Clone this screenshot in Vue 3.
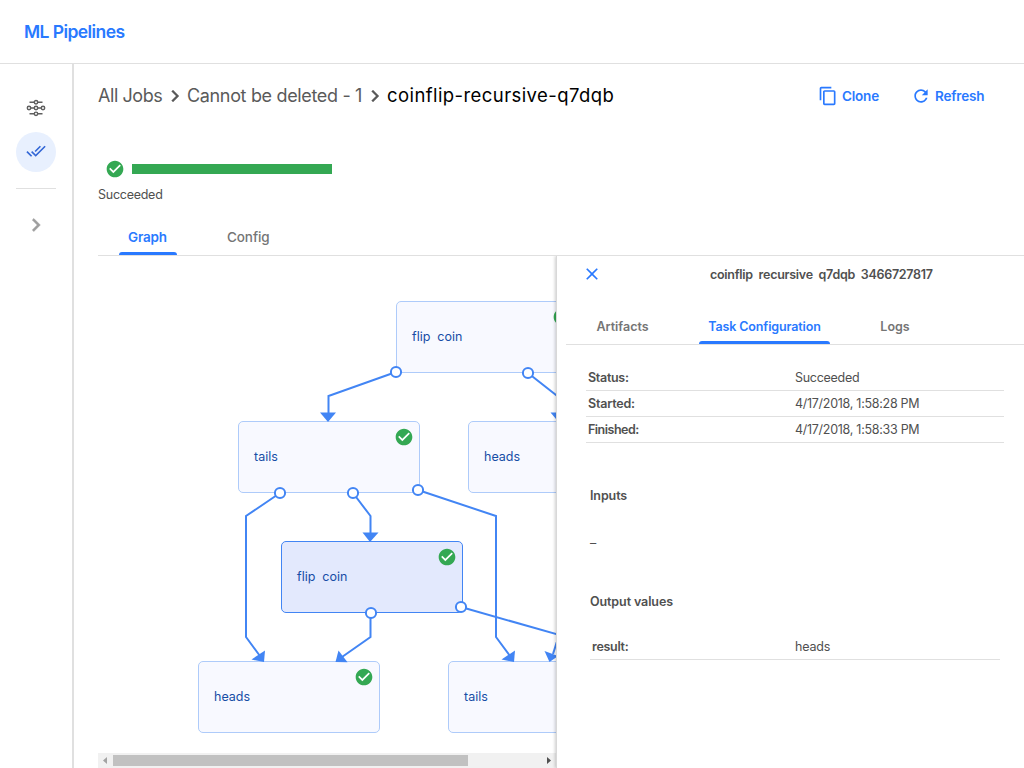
<script setup>
const nodes = [
  { x: 298, y: 45, label: 'flip  coin', cls: 'wide' },
  { x: 140, y: 165, label: 'tails' },
  { x: 370, y: 165, label: 'heads' },
  { x: 183, y: 285, label: 'flip  coin', cls: 'wide selected' },
  { x: 100, y: 405, label: 'heads' },
  { x: 350, y: 405, label: 'tails' },
]
const edges = [
  '298,116 230.5,140 230.5,158',
  '430,117 460.5,141 460.5,158',
  '182,237 148,260 148,381 162,400',
  '255,237 272.5,260 272.5,278',
  '320,234 398,260 398,381 412,400',
  '272.5,357 272.5,381 244,401',
  '363,351 500,390',
  '461,379 455,398',
]
const arrows = [
  '222,156.5 238,156.5 230,166',
  '452.5,156.5 468.5,156.5 460.5,166',
  '264.5,276.5 280.5,276.5 272,286',
  '153.5,403.5 167,394.5 166,406',
  '403.5,403.5 417,394.5 416,406',
  '240.5,394.5 237.5,406 249.5,406.3',
  '446.5,395 460,400 451.5,406',
]
const ports = [[298, 116], [430, 117], [182, 237], [255, 237], [320, 234], [273, 357], [363, 351]]
const title = 'coinflip  recursive  q7dqb  3466727817'
const details = [
  ['Status:', 'Succeeded', 'd0', 'v0'],
  ['Started:', '4/17/2018, 1:58:28 PM', 'd1', 'v1'],
  ['Finished:', '4/17/2018, 1:58:33 PM', 'd2', 'v1'],
]
const check = 'M12 2C6.48 2 2 6.48 2 12s4.48 10 10 10 10-4.48 10-10S17.52 2 12 2zm-2 15l-5-5 1.41-1.41L10 14.17l7.59-7.59L19 8l-9 9z'
</script>

<template>
  <div class="page">
    <header class="top"><span class="brand">ML Pipelines</span></header>
    <div class="body">
      <nav class="side">
        <div class="nav-item">
          <svg width="20" height="20" viewBox="0 0 20 20" fill="none" stroke="#5f5f5f" stroke-width="1.45">
            <path d="M3.5 4.2H8M12 4.2h4.500M4.700 10H8M12 10h3.300M3.500 15.800H8M12 15.800h4.500" />
            <circle cx="10" cy="4.200" r="1.700" /><circle cx="10" cy="10" r="1.700" /><circle cx="10" cy="15.800" r="1.700" />
            <circle cx="3" cy="10" r="1.700" /><circle cx="17" cy="10" r="1.700" />
          </svg>
        </div>
        <div class="nav-item active">
          <svg width="20" height="20" viewBox="0 0 24 24" fill="#3367d6">
            <path d="M18 7l-1.410-1.410-6.340 6.340 1.410 1.410L18 7zm4.240-1.410L11.660 16.170 7.480 12l-1.410 1.410L11.660 19l12-12-1.420-1.410zM.410 13.410L6 19l1.410-1.410L1.830 12 .410 13.410z" />
          </svg>
        </div>
        <div class="rule"></div>
        <svg class="expand" width="26" height="26" viewBox="0 0 24 24" fill="#9e9e9e" stroke="#9e9e9e" stroke-width=".5"><path d="M10 6L8.590 7.410 13.170 12l-4.580 4.590L10 18l6-6z" /></svg>
      </nav>
      <main class="main">
        <div class="toolbar">
          <span class="crumb c1">All Jobs</span>
          <svg class="sep" width="24" height="24" viewBox="0 0 24 24" fill="#5a5a5a" stroke="#5a5a5a" stroke-width=".3"><path d="M10 6L8.590 7.410 13.170 12l-4.580 4.590L10 18l6-6z" /></svg>
          <span class="crumb c2">Cannot be deleted - 1</span>
          <svg class="sep" width="24" height="24" viewBox="0 0 24 24" fill="#5a5a5a" stroke="#5a5a5a" stroke-width=".3"><path d="M10 6L8.590 7.410 13.170 12l-4.580 4.590L10 18l6-6z" /></svg>
          <span class="crumb c3">coinflip-recursive-q7dqb</span>
          <div class="action clone">
            <svg width="20" height="20" viewBox="0 0 24 24" fill="#2979ff"><path d="M16 1H4c-1.100 0-2 .900-2 2v14h2V3h12V1zm3 4H8c-1.100 0-2 .900-2 2v14c0 1.100.900 2 2 2h11c1.100 0 2-.900 2-2V7c0-1.100-.900-2-2-2zm0 16H8V7h11v14z" /></svg>
            <span>Clone</span>
          </div>
          <div class="action refresh">
            <svg width="20" height="20" viewBox="0 0 24 24" fill="#2979ff"><path d="M17.650 6.350C16.200 4.900 14.210 4 12 4c-4.420 0-7.990 3.580-7.990 8s3.570 8 7.990 8c3.730 0 6.840-2.550 7.730-6h-2.080c-.820 2.330-3.040 4-5.650 4-3.310 0-6-2.690-6-6s2.690-6 6-6c1.660 0 3.140.690 4.220 1.780L13 11h7V4l-2.350 2.350z" /></svg>
            <span>Refresh</span>
          </div>
        </div>
        <div class="progress">
          <svg width="20" height="20" viewBox="0 0 24 24" fill="#34a853"><path :d="check" /></svg>
          <div class="bar"></div>
        </div>
        <div class="state">Succeeded</div>
        <div class="tabs">
          <div class="tab on t1"><span>Graph</span></div>
          <div class="tab t2"><span>Config</span></div>
        </div>
        <div class="work">
          <section class="graph">
            <div class="canvas">
              <div v-for="(n, i) in nodes" :key="i" class="node" :class="n.cls" :style="{ left: n.x + 'px', top: n.y + 'px' }">
                <span>{{ n.label }}</span>
                <svg width="20" height="20" viewBox="0 0 24 24" fill="#34a853"><path d="M5 7h14v11H5z" fill="#fff" /><path :d="check" /></svg>
              </div>
              <svg class="edges" width="458" height="497" viewBox="0 0 458 497">
                <polyline v-for="(p, i) in edges" :key="'e' + i" :points="p" fill="none" stroke="#4285f4" stroke-width="2" />
                <polygon v-for="(p, i) in arrows" :key="'a' + i" :points="p" fill="#4285f4" />
                <circle v-for="(p, i) in ports" :key="'p' + i" :cx="p[0]" :cy="p[1]" r="5.100" fill="#fff" stroke="#4285f4" stroke-width="2" />
              </svg>
            </div>
            <div class="scroll">
              <svg class="arr" width="15" height="15"><path d="M9 4v7L5 7.500z" fill="#a3a3a3" /></svg>
              <div class="thumb"></div>
              <svg class="arr" width="15" height="15"><path d="M6 4v7l4-3.500z" fill="#505050" /></svg>
            </div>
          </section>
          <aside class="panel">
            <div class="panel-head">
              <svg width="20" height="20" viewBox="0 0 24 24" fill="#2979ff"><path d="M19 6.410L17.590 5 12 10.590 6.410 5 5 6.410 10.590 12 5 17.590 6.410 19 12 13.410 17.590 19 19 17.590 13.410 12z" /></svg>
              <span class="title">{{ title }}</span>
            </div>
            <div class="ptabs">
              <div class="ptab p1"><span>Artifacts</span></div>
              <div class="ptab p2 on"><span>Task Configuration</span></div>
              <div class="ptab p3"><span>Logs</span></div>
            </div>
            <div class="details">
              <div v-for="d in details" :key="d[0]" class="row"><b><i :class="d[2]">{{ d[0] }}</i></b><span :class="d[3]">{{ d[1] }}</span></div>
            </div>
            <div class="heading h1">Inputs</div>
            <div class="dash">–</div>
            <div class="heading h2">Output values</div>
            <div class="row out"><b><i class="d3">result:</i></b><span class="v2">heads</span></div>
          </aside>
        </div>
      </main>
    </div>
  </div>
</template>

<style>
body { margin: 0; overflow: hidden; background: #fff; }
</style>

<style scoped>
.page { width: 1024px; height: 768px; display: flex; flex-direction: column; overflow: hidden; font-family: Inter, "Open Sans", sans-serif; font-size: 12.5px; color: #505050; }
.page * { box-sizing: border-box; }
svg { display: block; flex: none; }
span, .state, .heading { white-space: pre; }
.top { height: 64px; flex: none; border-bottom: 1px solid #e0e0e0; padding-left: 24px; display: flex; align-items: center; }
.brand { color: #2979ff; font-size: 17.500px; font-weight: 600; letter-spacing: -.57px; }
.body { flex: 1; display: flex; min-height: 0; }
.side { width: 74px; flex: none; border-right: 2px solid #e0e0e0; display: flex; flex-direction: column; align-items: center; padding-top: 24px; }
.nav-item { width: 40px; height: 40px; border-radius: 50%; display: flex; align-items: center; justify-content: center; margin-bottom: 4px; flex: none; }
.nav-item:first-child { padding-bottom: 1px; }
.active { background: #e8f0fe; padding: 0 1px 2px 0; }
.rule { width: 40px; height: 1px; background: #e0e0e0; margin-top: 12px; }
.expand { margin-top: 23px; }
.main { flex: 1; min-width: 0; padding-left: 24px; display: flex; flex-direction: column; }
.toolbar { height: 64px; display: flex; align-items: center; font-size: 18px; flex: none; }
.crumb { color: #5a5a5a; flex: none; padding-bottom: 1px; }
.c1 { width: 65px; letter-spacing: -.42px; }
.c2 { width: 176px; letter-spacing: -.34px; }
.c3 { color: #000; width: 431px; font-size: 18.500px; letter-spacing: .42px; padding-bottom: 2px; }
.sep { margin-right: 0; }
.action { display: flex; align-items: center; color: #2979ff; font-size: 13.500px; font-weight: 600; flex: none; }
.clone { width: 93px; gap: 4px; letter-spacing: -.2px; }
.refresh { gap: 4px; letter-spacing: -.2px; }
.progress { margin-top: 31px; height: 20px; padding-left: 7px; display: flex; align-items: center; gap: 7px; }
.bar { width: 200px; height: 10px; background: #34a853; }
.state { height: 16px; line-height: 16px; margin-top: 8px; letter-spacing: -.26px; }
.tabs { height: 53px; display: flex; border-bottom: 1px solid #e0e0e0; font-size: 13.500px; color: #757575; font-weight: 500; flex: none; }
.tab { display: flex; justify-content: center; align-items: center; padding-top: 16px; position: relative; }
.t1 { width: 58px; margin-left: 20.500px; font-weight: 600; letter-spacing: -.2px; }
.t2 { margin-left: 50.500px; letter-spacing: -.1px; }
.on { color: #2979ff; }
.on::after { content: ""; position: absolute; left: 0; right: 0; bottom: 0; height: 3px; background: #2979ff; border-radius: 3px 3px 0 0; }
.work { flex: 1; display: flex; min-height: 0; }
.graph { width: 458px; flex: none; display: flex; flex-direction: column; }
.canvas { position: relative; flex: 1; overflow: hidden; }
.node { position: absolute; width: 182px; height: 72px; border: 1px solid #aecbfa; border-radius: 5px; background: #f8f9ff; color: #174ea6; display: flex; align-items: center; padding: 0 0 2px 15px; }
.node svg { position: absolute; top: 5px; right: 5px; }
.selected { background: #e3e9fd; border-color: #4285f4; }
.edges { position: absolute; left: 0; top: 0; }
.scroll { height: 15px; background: #f1f1f1; display: flex; align-items: center; }
.thumb { width: 355px; height: 11px; background: #c1c1c1; margin-right: 73px; }
.panel { flex: 1; min-width: 0; border-left: 1px solid #d8d8d8; box-shadow: -1px 0 3px rgba(0, 0, 0, .2); z-index: 1; background: #fff; clip-path: inset(0 0 0 -8px); }
.panel-head { height: 36px; display: flex; align-items: center; padding-left: 25px; gap: 108px; color: #505050; font-weight: 600; }
.title { letter-spacing: -.27px; }
.ptabs { height: 53px; margin-left: 9px; border-bottom: 1px solid #e0e0e0; display: flex; color: #757575; font-weight: 600; }
.ptab { position: relative; padding-top: 17px; display: flex; align-items: center; justify-content: center; }
.p1 { width: 53px; margin-left: 30px; }
.p2 { width: 131px; margin-left: 50px; letter-spacing: -.12px; }
.p3 { width: 30px; margin-left: 50px; }
.ptab.on { color: #2979ff; }
.details { margin: 20px 20px 0 29px; }
.row { height: 26px; display: flex; align-items: center; border-bottom: 1px solid #e0e0e0; }
.row b { width: 209px; padding-left: 2px; font-weight: 600; }
.row i { font-style: normal; }
.d0, .d3 { letter-spacing: -.3px; }
.d1, .d2 { letter-spacing: -.2px; }
.d2 { letter-spacing: -.5px; }
.v0, .v1 { letter-spacing: -.28px; }
.v2 { letter-spacing: -.15px; }
.heading { font-weight: 600; height: 20px; line-height: 20px; margin-left: 33px; letter-spacing: -.1px; }
.h1 { margin-top: 43px; }
.dash { margin: 27px 0 0 33px; height: 20px; line-height: 20px; }
.h2 { margin-top: 39px; }
.out { margin: 22px 24px 0 33px; }
.row.out b { width: 205px; }
</style>
